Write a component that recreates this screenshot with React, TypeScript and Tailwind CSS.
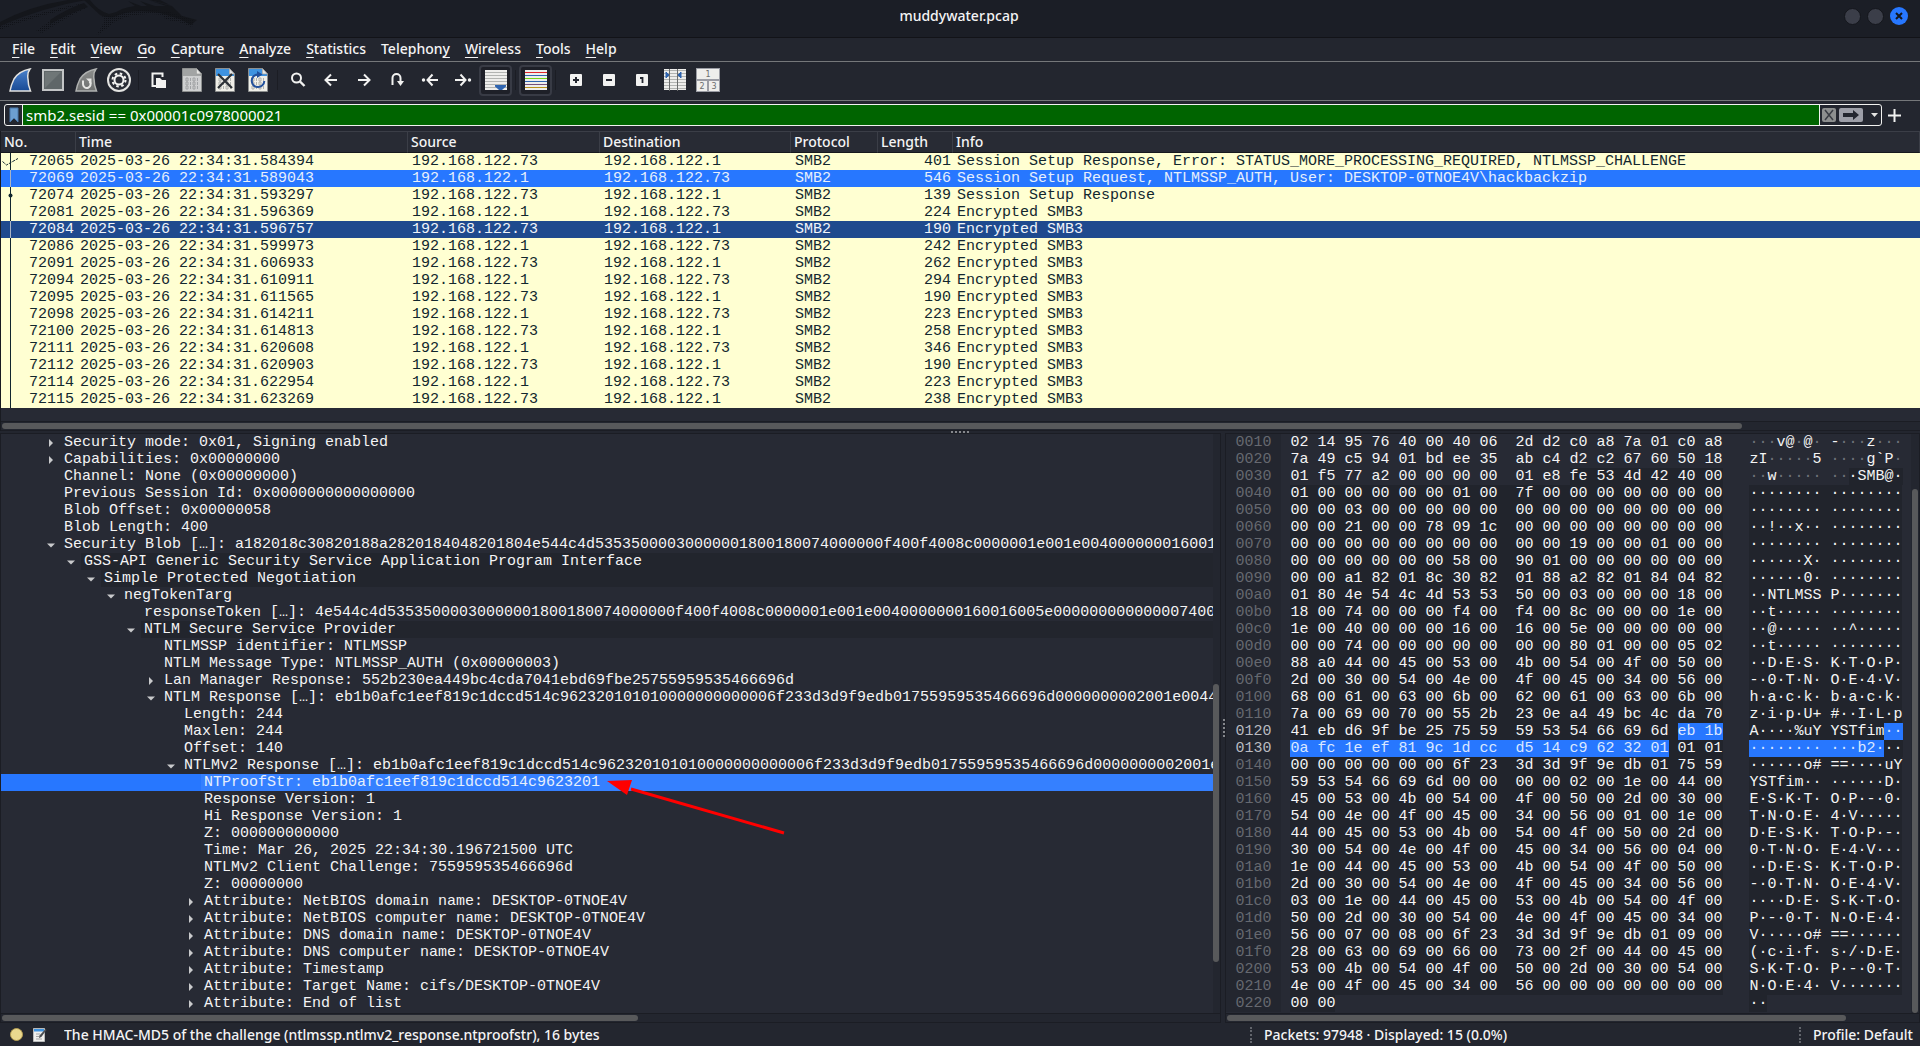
import type { ReactNode } from "react";

const SANS = "font-['Noto_Sans','Liberation_Sans',sans-serif] text-sm font-medium";
const MONO = "font-['Liberation_Mono',monospace] text-[15px] leading-[17px]";

/* ---------- title bar ---------- */

function Dragon() {
  return (
    <svg className="absolute left-0 top-0" width="210" height="37" viewBox="0 0 210 37" aria-hidden="true">
      <defs>
        <pattern id="dots" width="2" height="2" patternUnits="userSpaceOnUse">
          <rect width="1" height="1" fill="#101217" />
        </pattern>
      </defs>
      <path d="M0 22Q30 6 68 0H86Q44 7 0 26Z" fill="#14161b" />
      <path d="M0 26Q44 10 84 3L60 11Q24 20 0 30Z" fill="url(#dots)" />
      <path d="M36 31Q60 12 84 3L88 7Q66 18 42 33Z" fill="url(#dots)" />
      <path d="M50 20Q66 9 84 3L88 7Q66 15 50 24Z" fill="#14161b" />
      <path d="M84 0H90Q98 11 109 14Q116 13 122 9Q128 7 135 6L128 1L141 6H147L140 1L155 6H166L151 1L172 6L182 16L197 20L191 25L180 19L160 13Q132 8 114 17Q106 18 100 15Z" fill="#14161b" />
      <path d="M100 15Q106 18 104 22Q100 30 96 36L106 29Q116 20 126 17Q145 12 162 15Q164 21 176 21L192 27L194 20L170 12Q132 6 112 16Z" fill="url(#dots)" />
      <path d="M149 0H160L170 5Z" fill="#14161b" />
    </svg>
  );
}

function TitleBar() {
  return (
    <header className="relative flex h-[38px] shrink-0 items-start border-b border-[#121318] bg-[#1b1e26]">
      <Dragon />
      <div className="flex-1" />
      <h1 className={`${SANS} pt-[5px] pl-[10px] leading-[22px] text-[#f4f4f5]`}>muddywater.pcap</h1>
      <div className="flex flex-1 justify-end gap-[6px] pt-[7px] pr-[12px]">
        <button aria-label="Minimize" className="mt-px h-[17px] w-[17px] rounded-full border border-[#14161c] bg-[#3b3e49]" />
        <button aria-label="Maximize" className="mt-px h-[17px] w-[17px] rounded-full border border-[#14161c] bg-[#3b3e49]" />
        <button aria-label="Close" className="flex h-[18px] w-[18px] items-center justify-center rounded-full bg-[#2777ff]">
          <svg width="8" height="8" viewBox="0 0 8 8">
            <path d="M1 1L7 7M7 1L1 7" stroke="#14161c" strokeWidth="2" />
          </svg>
        </button>
      </div>
    </header>
  );
}

/* ---------- menu ---------- */

const MENU: [string, number][] = [
  ["File", 0], ["Edit", 0], ["View", 0], ["Go", 0], ["Capture", 0], ["Analyze", 0],
  ["Statistics", 0], ["Telephony", 8], ["Wireless", 0], ["Tools", 0], ["Help", 0],
];

function MenuBar() {
  return (
    <nav className={`${SANS} flex h-[24px] shrink-0 items-start gap-[15px] border-b border-[#75777a] bg-[#23262f] pl-[12px] text-[#f4f4f5]`}>
      {MENU.map(([label, key]) => (
        <button key={label} className="leading-[22px]">
          {label.slice(0, key)}
          <span className="underline decoration-1 underline-offset-[3px]">{label[key]}</span>
          {label.slice(key + 1)}
        </button>
      ))}
    </nav>
  );
}

/* ---------- toolbar ---------- */

function Icon({ children }: { children: ReactNode }) {
  return (
    <svg width="24" height="24" viewBox="0 0 24 24" fill="none" aria-hidden="true">
      {children}
    </svg>
  );
}

function Fin({ edge, from, to }: { edge: string; from: string; to: string }) {
  const id = "fin" + from.slice(1);
  return (
    <>
      <defs>
        <linearGradient id={id} x1="0" y1="0" x2="0" y2="1">
          <stop offset="0" stopColor={from} />
          <stop offset="1" stopColor={to} />
        </linearGradient>
      </defs>
      <path d="M2 23Q3 17 6 11Q11 3 22 1Q19 5 20 11Q20 17 22.500 23Z" fill={`url(#${id})`} stroke={edge} strokeWidth="1.500" />
    </>
  );
}

function Doc({ body, top, bits }: { body: string; top: string; bits: string }) {
  return (
    <>
      <path d="M2.500 .5H16.500L21.500 6V23.500H2.500Z" fill={body} stroke="#8d8f8f" />
      <path d="M3 1H16V6H21V8H3Z" fill={top} />
      <path d="M16.500 .5V6H21.500Z" fill="#e8e8e6" stroke="#8d8f8f" strokeWidth=".6" />
      {[10, 14, 18].map((y) => (
        <path key={y} d={`M6 ${y}h2v3h-2zM10.500 ${y}v3M13 ${y}h2v3h-2zM17.500 ${y}v3`} stroke={bits} strokeWidth=".9" />
      ))}
    </>
  );
}

const LINES = [2.5, 5.5, 8.5, 11.5, 14.5, 17.5, 20.5];

function Page({ colors }: { colors: string[] }) {
  return (
    <>
      <rect x="1" y="2" width="22" height="20" fill="#eeeeec" />
      {colors.map((c, i) => (
        <path key={i} d={`M1 ${[4.5, 7.5, 10.5, 13.5, 16.5, 19.5][i]}H23`} stroke={c} />
      ))}
    </>
  );
}

const ink = "#f2f2f1";

const TOOLS: { name: string; icon?: ReactNode; on?: boolean }[] = [
  { name: "Start capturing packets", icon: <Fin edge="#e3e3e1" from="#4a82cc" to="#194a94" /> },
  {
    name: "Stop capturing packets",
    icon: (
      <>
        <rect x="2" y="2" width="20" height="20" fill="#5f6668" stroke="#c3c5c6" strokeWidth="2" />
        <path d="M4 20L20 4H4Z" fill="#798082" opacity=".6" />
      </>
    ),
  },
  {
    name: "Restart current capture",
    icon: (
      <>
        <Fin edge="#b0b2b1" from="#8b8d8c" to="#6e7070" />
        <path d="M9 12.500V16A3.800 3.800 0 1 0 15.500 13.500" stroke="#e6e6e4" strokeWidth="2" />
        <path d="M12 10.500H17.500V16Z" fill="#e6e6e4" />
      </>
    ),
  },
  {
    name: "Capture options",
    icon: (
      <>
        <circle cx="12" cy="12" r="11" fill="#2a2d36" stroke="#e4e4e2" strokeWidth="2" />
        <circle cx="12" cy="12" r="6.500" stroke="#f4f4f2" strokeWidth="2" strokeDasharray="2.550 2.550" />
        <circle cx="12" cy="12" r="4.500" stroke="#f4f4f2" strokeWidth="2" />
      </>
    ),
  },
  { name: "|a" },
  {
    name: "Open a capture file",
    icon: (
      <>
        <path d="M9 18H5.500V5.500H15.500V9" stroke={ink} strokeWidth="2" />
        <path d="M9 10H13L15 12H19V20H9Z" fill={ink} />
      </>
    ),
  },
  { name: "Save this capture file", icon: <Doc body="#cfd0d1" top="#a2a4a4" bits="#9c9ea0" /> },
  {
    name: "Close this capture file",
    icon: (
      <>
        <Doc body="#f0efe8" top="#3e93e0" bits="#a7a9a6" />
        <path d="M5 6L19 20M19 6L5 20" stroke="#2c3136" strokeWidth="2.200" />
      </>
    ),
  },
  {
    name: "Reload this file",
    icon: (
      <>
        <Doc body="#f0efe8" top="#3e93e0" bits="#a7a9a6" />
        <path d="M12 6.500A6.300 6.300 0 1 0 18.300 13" stroke="#21509c" strokeWidth="2" />
        <path d="M11 3L16.500 6.500L11 10Z" fill="#21509c" />
      </>
    ),
  },
  { name: "|b" },
  {
    name: "Find a packet",
    icon: (
      <>
        <circle cx="10.500" cy="10" r="4.500" stroke={ink} strokeWidth="2" />
        <path d="M14 13.500L18.500 18" stroke={ink} strokeWidth="2.400" />
      </>
    ),
  },
  { name: "Previous packet", icon: <path d="M18 12H7M12 6.500L6.500 12L12 17.500" stroke={ink} strokeWidth="2" /> },
  { name: "Next packet", icon: <path d="M6 12H17M12 6.500L17.500 12L12 17.500" stroke={ink} strokeWidth="2" /> },
  {
    name: "Go to packet",
    icon: (
      <>
        <path d="M7.500 17V10A4 4 0 0 1 15.500 10V14" stroke={ink} strokeWidth="2" />
        <path d="M12 13H19L15.500 18Z" fill={ink} />
      </>
    ),
  },
  {
    name: "First packet",
    icon: (
      <>
        <circle cx="5.500" cy="12" r="1.700" fill={ink} />
        <path d="M20 12H10M14.500 6.500L9.500 12L14.500 17.500" stroke={ink} strokeWidth="2" />
      </>
    ),
  },
  {
    name: "Last packet",
    icon: (
      <>
        <circle cx="18.500" cy="12" r="1.700" fill={ink} />
        <path d="M4 12H14M9.500 6.500L14.500 12L9.500 17.500" stroke={ink} strokeWidth="2" />
      </>
    ),
  },
  {
    name: "Scroll to last packet",
    on: true,
    icon: (
      <>
        <Page colors={["#b2b4b2", "#b2b4b2", "#b2b4b2", "#b2b4b2", "#b2b4b2", "#b2b4b2"]} />
        <path d="M11 17H22V18.500L18 22H15L11 18.500Z" fill="#2f65b0" />
      </>
    ),
  },
  { name: "|c" },
  {
    name: "Colorize packets",
    on: true,
    icon: <Page colors={["#e0262a", "#2f65b0", "#73d216", "#2f65b0", "#75507b", "#b8901c"]} />,
  },
  { name: "|d" },
  {
    name: "Zoom in",
    icon: (
      <>
        <rect x="6" y="6" width="12" height="12" rx="1" fill={ink} />
        <path d="M12 9V15M9 12H15" stroke="#23262f" strokeWidth="2" />
      </>
    ),
  },
  {
    name: "Zoom out",
    icon: (
      <>
        <rect x="6" y="6" width="12" height="12" rx="1" fill={ink} />
        <path d="M9 12H15" stroke="#23262f" strokeWidth="2" />
      </>
    ),
  },
  {
    name: "Normal size",
    icon: (
      <>
        <rect x="6" y="6" width="12" height="12" rx="1" fill={ink} />
        <path d="M10 10H12.500V15" stroke="#23262f" strokeWidth="1.800" />
      </>
    ),
  },
  {
    name: "Resize columns",
    icon: (
      <>
        <rect x="1" y="1" width="22" height="21" fill="#eeeeec" />
        {LINES.map((y) => (
          <path key={y} d={`M1 ${y}H23`} stroke="#b2b4b2" />
        ))}
        <path d="M6.500 1V23M14.500 1V23" stroke="#6b6d6d" />
        <path d="M3 4L6 7L3 10ZM18 4L15 7L18 10Z" fill="#2f65b0" stroke="#2f65b0" />
      </>
    ),
  },
  {
    name: "Layout",
    icon: (
      <>
        <rect x="0" y="0" width="24" height="24" fill="#9a9ca4" />
        <path d="M1 1H23V11H1ZM1 13H11V23H1ZM13 13H23V23H13Z" fill="#eeeeec" />
        <text x="12" y="9" textAnchor="middle" fontSize="8" fill="#6b6d6d" fontFamily="DejaVu Sans">1</text>
        <text x="6" y="21" textAnchor="middle" fontSize="8" fill="#6b6d6d" fontFamily="DejaVu Sans">2</text>
        <text x="18" y="21" textAnchor="middle" fontSize="8" fill="#6b6d6d" fontFamily="DejaVu Sans">3</text>
      </>
    ),
  },
];

function Toolbar() {
  return (
    <div className="flex h-[39px] shrink-0 items-center border-b border-[#75777a] bg-[#23262f] pb-[2px] pl-[3px]">
      {TOOLS.map((t) =>
        t.icon ? (
          <button
            key={t.name}
            aria-label={t.name}
            className={
              t.on
                ? "flex h-[31px] w-[33px] items-center justify-center rounded-[4px] border-2 border-[#383b45] bg-[#1e2028]"
                : "flex h-[31px] w-[33px] items-center justify-center"
            }
          >
            <Icon>{t.icon}</Icon>
          </button>
        ) : (
          <div key={t.name} className="flex w-[7px] justify-center">
            <div className="h-[20px] w-px bg-[#1b1d24]" />
          </div>
        ),
      )}
    </div>
  );
}

/* ---------- display filter ---------- */

function FilterBar() {
  return (
    <div className="flex shrink-0 items-center bg-[#23262f] pt-[3px] pb-[5px] pl-[4px] pr-[19px]">
      <div className="flex h-[22px] flex-1 overflow-hidden rounded-[3px] border border-[#f2f2f0]">
        <button aria-label="Filter bookmarks" className="flex w-[18px] items-center justify-center border-r border-[#f2f2f0]">
          <svg width="10" height="16" viewBox="0 0 10 16">
            <path d="M1 1H9V15L5 11L1 15Z" fill="#6c9fd1" stroke="#4a79ab" />
          </svg>
        </button>
        <input
          aria-label="Display filter"
          defaultValue="smb2.sesid == 0x00001c0978000021"
          className="min-w-0 flex-1 bg-[#006400] pl-[3px] font-['Noto_Sans','Liberation_Sans',sans-serif] text-[15px] leading-[20px] text-white outline-none"
        />
        <div className="flex items-center border-l border-[#f2f2f0] pl-[2px]">
          <button aria-label="Clear filter" className="flex h-[14px] w-[14px] items-center justify-center rounded-[2px] bg-[#8d8f8f]">
            <svg width="10" height="12" viewBox="0 0 10 12">
              <path d="M1 1L9 11M9 1L1 11" stroke="#3a3d44" strokeWidth="1.500" />
            </svg>
          </button>
          <button aria-label="Apply filter" className="ml-[3px] flex h-[14px] w-[24px] items-center justify-center rounded-[2px] bg-[#9d9fa8]">
            <svg width="18" height="10" viewBox="0 0 18 10">
              <path d="M1 3H11V0L17 5L11 10V7H1Z" fill="#23262f" />
            </svg>
          </button>
          <button aria-label="Recent filters" className="flex w-[18px] justify-center pl-[4px]">
            <svg width="7" height="4" viewBox="0 0 7 4">
              <path d="M0 0H7L3.500 4Z" fill="#e4e4e2" />
            </svg>
          </button>
        </div>
      </div>
      <button aria-label="Add filter button" className="ml-[6px]">
        <svg width="13" height="13" viewBox="0 0 13 13">
          <path d="M6.500 0V13M0 6.500H13" stroke={ink} strokeWidth="2" />
        </svg>
      </button>
    </div>
  );
}

/* ---------- packet list ---------- */

const A = "192.168.122.73";
const B = "192.168.122.1";

const PACKETS: [string, string, boolean, number, string][] = [
  ["72065", "584394", false, 401, "Session Setup Response, Error: STATUS_MORE_PROCESSING_REQUIRED, NTLMSSP_CHALLENGE"],
  ["72069", "589043", true, 546, "Session Setup Request, NTLMSSP_AUTH, User: DESKTOP-0TNOE4V\\hackbackzip"],
  ["72074", "593297", false, 139, "Session Setup Response"],
  ["72081", "596369", true, 224, "Encrypted SMB3"],
  ["72084", "596757", false, 190, "Encrypted SMB3"],
  ["72086", "599973", true, 242, "Encrypted SMB3"],
  ["72091", "606933", false, 262, "Encrypted SMB3"],
  ["72094", "610911", true, 294, "Encrypted SMB3"],
  ["72095", "611565", false, 190, "Encrypted SMB3"],
  ["72098", "614211", true, 223, "Encrypted SMB3"],
  ["72100", "614813", false, 258, "Encrypted SMB3"],
  ["72111", "620608", true, 346, "Encrypted SMB3"],
  ["72112", "620903", false, 190, "Encrypted SMB3"],
  ["72114", "622954", true, 223, "Encrypted SMB3"],
  ["72115", "623269", false, 238, "Encrypted SMB3"],
];

const COLUMNS: [string, string][] = [
  ["No.", "w-[75px]"],
  ["Time", "w-[332px]"],
  ["Source", "w-[192px]"],
  ["Destination", "w-[191px]"],
  ["Protocol", "w-[87px]"],
  ["Length", "w-[75px]"],
  ["Info", "w-auto"],
];

function Relation({ index, lit }: { index: number; lit: boolean }) {
  const c = lit ? "#a9b4c6" : "#12272e";
  return (
    <svg width="20" height="17" viewBox="0 0 20 17" aria-hidden="true" className="block">
      <path d="M9.500 0V17" stroke={c} />
      {index === 0 && <path d="M1.500 8.500L5.500 12L17 5.500" stroke={c} fill="none" strokeDasharray="3 1" />}
      {index === 2 && <circle cx="9.500" cy="8.500" r="2" fill={c} />}
    </svg>
  );
}

function PacketList() {
  return (
    <section className="shrink-0 border-l border-[#191b21] bg-[#272a34]">
      <table className="w-full table-fixed border-separate border-spacing-0">
        <thead className={`${SANS} bg-[#282b34] text-left text-[#f4f4f5]`}>
          <tr>
            {COLUMNS.map(([name, width]) => (
              <th key={name} className={`${width} h-[22px] border-t border-r border-b border-[#3b3e47] border-b-[#16181e] py-0 pl-[3px] leading-[20px] font-medium`}>
                {name}
              </th>
            ))}
          </tr>
        </thead>
        <tbody className={`${MONO} whitespace-pre`}>
          {PACKETS.map(([no, time, out, len, info], i) => (
            <tr
              key={no}
              className={
                i === 1
                  ? "bg-[#2777ff] text-[#e6effc]"
                  : i === 4
                    ? "bg-[#1f4a8e] text-[#f0f4fa]"
                    : "bg-[#ffffd2] text-[#12272e]"
              }
            >
              <td className="p-0">
                <div className="flex justify-between pr-[2px]">
                  <Relation index={i} lit={i === 1 || i === 4} />
                  <span>{no}</span>
                </div>
              </td>
              <td className="p-0 pl-[4px]">{`2025-03-26 22:34:31.${time}`}</td>
              <td className="p-0 pl-[4px]">{out ? B : A}</td>
              <td className="p-0 pl-[4px]">{out ? A : B}</td>
              <td className="p-0 pl-[4px]">SMB2</td>
              <td className="p-0 pr-[2px] text-right">{len}</td>
              <td className="truncate p-0 pl-[4px]">{info}</td>
            </tr>
          ))}
        </tbody>
      </table>
      <div className="h-[13px]" />
      <div className="border-y border-[#1b1d24] bg-[#23262f] py-px pl-px">
        <div className="h-[6px] w-[90.700%] rounded-full bg-[#58595b]" />
      </div>
    </section>
  );
}

/* ---------- packet details ---------- */

const BLOB = "4e544c4d53535000030000001800180074000000f400f4008c0000001e001e0040000000160016005e00000000000000740000";
const PROOF = "eb1b0afc1eef819c1dccd514c9623201";
const NTLM = PROOF + "01010000000000006f233d3d9f9edb01755959535466696d0000000002001e0044";

type Node = { level: number; text: string; open?: boolean; dark?: boolean; selected?: boolean };

const TREE: Node[] = [
  { level: 0, text: "Security mode: 0x01, Signing enabled", open: false },
  { level: 0, text: "Capabilities: 0x00000000", open: false },
  { level: 0, text: "Channel: None (0x00000000)" },
  { level: 0, text: "Previous Session Id: 0x0000000000000000" },
  { level: 0, text: "Blob Offset: 0x00000058" },
  { level: 0, text: "Blob Length: 400" },
  { level: 0, text: "Security Blob […]: a182018c30820188a2820184048201804" + BLOB.slice(1, 77), open: true },
  { level: 1, text: "GSS-API Generic Security Service Application Program Interface", open: true, dark: true },
  { level: 2, text: "Simple Protected Negotiation", open: true, dark: true },
  { level: 3, text: "negTokenTarg", open: true },
  { level: 4, text: "responseToken […]: " + BLOB.slice(0, 100) },
  { level: 4, text: "NTLM Secure Service Provider", open: true, dark: true },
  { level: 5, text: "NTLMSSP identifier: NTLMSSP" },
  { level: 5, text: "NTLM Message Type: NTLMSSP_AUTH (0x00000003)" },
  { level: 5, text: "Lan Manager Response: 552b230ea449bc4cda7041ebd69fbe25755959535466696d", open: false },
  { level: 5, text: "NTLM Response […]: " + NTLM, open: true },
  { level: 6, text: "Length: 244" },
  { level: 6, text: "Maxlen: 244" },
  { level: 6, text: "Offset: 140" },
  { level: 6, text: "NTLMv2 Response […]: " + NTLM.slice(0, 95), open: true },
  { level: 7, text: "NTProofStr: " + PROOF, selected: true },
  { level: 7, text: "Response Version: 1" },
  { level: 7, text: "Hi Response Version: 1" },
  { level: 7, text: "Z: 000000000000" },
  { level: 7, text: "Time: Mar 26, 2025 22:34:30.196721500 UTC" },
  { level: 7, text: "NTLMv2 Client Challenge: 755959535466696d" },
  { level: 7, text: "Z: 00000000" },
  { level: 7, text: "Attribute: NetBIOS domain name: DESKTOP-0TNOE4V", open: false },
  { level: 7, text: "Attribute: NetBIOS computer name: DESKTOP-0TNOE4V", open: false },
  { level: 7, text: "Attribute: DNS domain name: DESKTOP-0TNOE4V", open: false },
  { level: 7, text: "Attribute: DNS computer name: DESKTOP-0TNOE4V", open: false },
  { level: 7, text: "Attribute: Timestamp", open: false },
  { level: 7, text: "Attribute: Target Name: cifs/DESKTOP-0TNOE4V", open: false },
  { level: 7, text: "Attribute: End of list", open: false },
];

const INDENT = [
  "pl-[39px]", "pl-[59px]", "pl-[79px]", "pl-[99px]", "pl-[119px]", "pl-[139px]", "pl-[159px]", "pl-[179px]",
];

function TreeRow({ node }: { node: Node }) {
  return (
    <li
      role="treeitem"
      aria-expanded={node.open}
      className={`flex ${INDENT[node.level]} ${node.selected ? "bg-[#2777ff] text-[#e6effc]" : "text-[#f4f4f5]"}`}
    >
      <span className="flex w-[21px] shrink-0 items-center justify-center">
        {node.open !== undefined && (
          <svg width="8" height="8" viewBox="0 0 8 8" aria-hidden="true">
            <path d={node.open ? "M0 2.500H8L4 6.500Z" : "M2 0L6 4L2 8Z"} fill="#c9cacc" />
          </svg>
        )}
      </span>
      <span
        className={`min-w-0 flex-1 overflow-hidden pl-[3px] ${node.dark ? "bg-[#22252d]" : ""} ${node.selected ? "bg-[#3580ff]" : ""}`}
      >
        {node.text}
      </span>
    </li>
  );
}

function Arrow() {
  return (
    <svg className="absolute left-[606px] top-[345px]" width="180" height="56" viewBox="0 0 180 56" aria-hidden="true">
      <path d="M24 10L177 54" stroke="#ff0000" strokeWidth="3" />
      <path d="M0 2L25 1L20 16Z" fill="#ff0000" />
    </svg>
  );
}

function Details() {
  return (
    <section className="relative flex min-w-0 flex-[1222] flex-col border border-[#1b1d24] bg-[#272a34]">
      <div className="flex min-h-0 flex-1">
        <ul role="tree" className={`${MONO} min-w-0 flex-1 overflow-hidden whitespace-pre`}>
          {TREE.map((node, i) => (
            <TreeRow key={i} node={node} />
          ))}
        </ul>
        <div className="w-[7px] bg-[#23262f]">
          <div className="mt-[250px] h-[278px] w-[6px] rounded-full bg-[#58595b]" />
        </div>
      </div>
      <div className="border-t border-[#1b1d24] bg-[#23262f] py-px pl-px">
        <div className="h-[6px] w-[52.200%] rounded-full bg-[#58595b]" />
      </div>
      <Arrow />
    </section>
  );
}

/* ---------- packet bytes ---------- */

const HEX = [
  "02 14 95 76 40 00 40 06 2d d2 c0 a8 7a 01 c0 a8",
  "7a 49 c5 94 01 bd ee 35 ab c4 d2 c2 67 60 50 18",
  "01 f5 77 a2 00 00 00 00 01 e8 fe 53 4d 42 40 00",
  "01 00 00 00 00 00 01 00 7f 00 00 00 00 00 00 00",
  "00 00 03 00 00 00 00 00 00 00 00 00 00 00 00 00",
  "00 00 21 00 00 78 09 1c 00 00 00 00 00 00 00 00",
  "00 00 00 00 00 00 00 00 00 00 19 00 00 01 00 00",
  "00 00 00 00 00 00 58 00 90 01 00 00 00 00 00 00",
  "00 00 a1 82 01 8c 30 82 01 88 a2 82 01 84 04 82",
  "01 80 4e 54 4c 4d 53 53 50 00 03 00 00 00 18 00",
  "18 00 74 00 00 00 f4 00 f4 00 8c 00 00 00 1e 00",
  "1e 00 40 00 00 00 16 00 16 00 5e 00 00 00 00 00",
  "00 00 74 00 00 00 00 00 00 00 80 01 00 00 05 02",
  "88 a0 44 00 45 00 53 00 4b 00 54 00 4f 00 50 00",
  "2d 00 30 00 54 00 4e 00 4f 00 45 00 34 00 56 00",
  "68 00 61 00 63 00 6b 00 62 00 61 00 63 00 6b 00",
  "7a 00 69 00 70 00 55 2b 23 0e a4 49 bc 4c da 70",
  "41 eb d6 9f be 25 75 59 59 53 54 66 69 6d eb 1b",
  "0a fc 1e ef 81 9c 1d cc d5 14 c9 62 32 01 01 01",
  "00 00 00 00 00 00 6f 23 3d 3d 9f 9e db 01 75 59",
  "59 53 54 66 69 6d 00 00 00 00 02 00 1e 00 44 00",
  "45 00 53 00 4b 00 54 00 4f 00 50 00 2d 00 30 00",
  "54 00 4e 00 4f 00 45 00 34 00 56 00 01 00 1e 00",
  "44 00 45 00 53 00 4b 00 54 00 4f 00 50 00 2d 00",
  "30 00 54 00 4e 00 4f 00 45 00 34 00 56 00 04 00",
  "1e 00 44 00 45 00 53 00 4b 00 54 00 4f 00 50 00",
  "2d 00 30 00 54 00 4e 00 4f 00 45 00 34 00 56 00",
  "03 00 1e 00 44 00 45 00 53 00 4b 00 54 00 4f 00",
  "50 00 2d 00 30 00 54 00 4e 00 4f 00 45 00 34 00",
  "56 00 07 00 08 00 6f 23 3d 3d 9f 9e db 01 09 00",
  "28 00 63 00 69 00 66 00 73 00 2f 00 44 00 45 00",
  "53 00 4b 00 54 00 4f 00 50 00 2d 00 30 00 54 00",
  "4e 00 4f 00 45 00 34 00 56 00 00 00 00 00 00 00",
  "00 00",
].map((row) => row.split(" "));

const PLAIN = 0;
const PROTOCOL = 1;
const FIELD = 2;
const DIM = 3;

const RUN_STYLE = ["", "bg-[#21242c]", "bg-[#2777ff] text-[#dbe8ff]", "text-[#6f727a]"];

function styleOf(address: number) {
  if (address >= 0x12e && address < 0x13e) return FIELD;
  return address >= 0x3a ? PROTOCOL : PLAIN;
}

type Run = { text: string; style: number };

function push(runs: Run[], text: string, style: number) {
  const last = runs[runs.length - 1];
  if (last && last.style === style) last.text += text;
  else runs.push({ text, style });
}

function Runs({ runs }: { runs: Run[] }) {
  return (
    <>
      {runs.map((r, i) => (
        <span key={i} className={RUN_STYLE[r.style]}>
          {r.text}
        </span>
      ))}
    </>
  );
}

function hexRuns(row: string[], base: number) {
  const runs: Run[] = [];
  row.forEach((byte, i) => {
    const style = styleOf(base + i);
    if (i > 0) push(runs, i === 8 ? "  " : " ", Math.min(style, styleOf(base + i - 1)));
    push(runs, byte, style);
  });
  return runs;
}

function asciiRuns(row: string[], base: number) {
  const runs: Run[] = [];
  row.forEach((byte, i) => {
    const style = styleOf(base + i);
    const code = parseInt(byte, 16);
    const printable = code >= 0x20 && code < 0x7f;
    if (i === 8) push(runs, " ", Math.min(style, styleOf(base + i - 1)));
    push(runs, printable ? String.fromCharCode(code) : "·", style === PLAIN && !printable ? DIM : style);
  });
  return runs;
}

function Bytes() {
  return (
    <section className="flex min-w-0 flex-[694] flex-col border border-[#1b1d24] bg-[#272a34]">
      <div className="flex min-h-0 flex-1">
        <div className={`${MONO} min-w-0 flex-1 overflow-hidden whitespace-pre text-[#f4f4f5]`}>
          {HEX.map((row, i) => {
            const base = 0x10 + i * 16;
            const current = base === 0x120 || base === 0x130;
            return (
              <div key={base} className="flex">
                <span className={`w-[55px] shrink-0 bg-[#23262f] pl-[9px] ${current ? "text-[#b9bbc0]" : "text-[#666970]"}`}>
                  {base.toString(16).padStart(4, "0")}
                </span>
                <span className="flex w-[468px] shrink-0 pl-[9px]">
                  <Runs runs={hexRuns(row, base)} />
                </span>
                <span className="flex">
                  <Runs runs={asciiRuns(row, base)} />
                </span>
              </div>
            );
          })}
        </div>
        <div className="flex w-[8px] flex-col items-center bg-[#23262f] pt-[55px]">
          <div className="w-[6px] flex-1 rounded-full bg-[#58595b]" />
        </div>
      </div>
      <div className="border-t border-[#1b1d24] bg-[#23262f] py-px pl-px">
        <div className="h-[6px] w-[89.500%] rounded-full bg-[#58595b]" />
      </div>
    </section>
  );
}

/* ---------- status bar ---------- */

function Grip() {
  return <div className="h-[16px] w-0 border-l-2 border-dotted border-[#62656c]" />;
}

function StatusBar() {
  return (
    <footer className={`${SANS} flex h-[23px] shrink-0 items-center bg-[#23262f] leading-[22px] text-[#f4f4f5]`}>
      <div className="flex min-w-0 flex-[1250] items-center">
        <button aria-label="Expert information" className="ml-[10px] h-[13px] w-[13px] rounded-full border border-[#b79f52] bg-[#ead98f]" />
        <button aria-label="Capture file comments" className="ml-[10px]">
          <svg width="14" height="16" viewBox="0 0 14 16">
            <path d="M.5 1.500H11.500V14.500H.5Z" fill="#f0f0ee" stroke="#b8babb" />
            <path d="M1 2H11V4.500H1Z" fill="#3e93e0" />
            <path d="M3 7H7M3 9.500H6M3 12H9" stroke="#a4a6a6" />
            <path d="M12.500 2L6.500 8.500L6 11L8.300 10L13.500 3Z" fill="#4a4d52" />
          </svg>
        </button>
        <p className="ml-[17px] truncate">The HMAC-MD5 of the challenge (ntlmssp.ntlmv2_response.ntproofstr), 16 bytes</p>
      </div>
      <div className="flex flex-[549] items-center">
        <Grip />
        <p className="ml-[12px]">Packets: 97948 · Displayed: 15 (0.0%)</p>
      </div>
      <div className="flex flex-[121] items-center">
        <Grip />
        <p className="ml-[12px] whitespace-nowrap">Profile: Default</p>
      </div>
    </footer>
  );
}

export default function App() {
  return (
    <div className="flex h-screen flex-col overflow-hidden bg-[#23262f]">
      <TitleBar />
      <MenuBar />
      <Toolbar />
      <FilterBar />
      <PacketList />
      <div className="flex h-[2px] shrink-0 items-center justify-center">
        <div className="w-[18px] border-t-2 border-dotted border-[#85878c]" />
      </div>
      <main className="flex min-h-0 flex-1">
        <Details />
        <div className="flex w-[4px] items-center justify-end">
          <div className="h-[18px] border-l-2 border-dotted border-[#85878c]" />
        </div>
        <Bytes />
      </main>
      <StatusBar />
    </div>
  );
}
